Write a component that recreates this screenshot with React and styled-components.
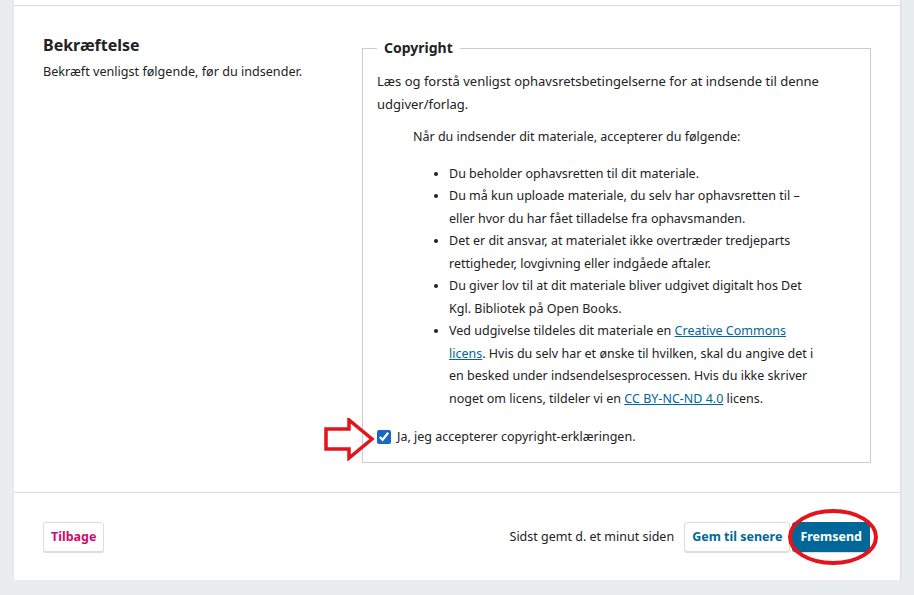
import React from 'react';
import styled, { createGlobalStyle } from 'styled-components';

const Global = createGlobalStyle`
  html, body {
    margin: 0;
    padding: 0;
    background: #eaeded;
    font-family: "Noto Sans", "DejaVu Sans", sans-serif;
    color: #222;
  }
`;

const Page = styled.div`
  width: 887px;
  margin-left: 14px;
  background: #fff;
  box-shadow: 0 1px 1px rgba(0, 0, 0, 0.12);
  border-right: 1px solid #dcdfe0;
  box-sizing: border-box;
`;

const TopStrip = styled.div`
  height: 5px;
  border-bottom: 1px solid #ddd;
`;

const Section = styled.div`
  display: flex;
  padding: 31px 29px 29px 29px;
  border-bottom: 1px solid #ddd;
`;

const Intro = styled.div`
  width: 319px;
  flex: none;
`;

const Heading = styled.h2`
  margin: 0;
  font-size: 16px;
  line-height: 16px;
  font-weight: 700;
`;

const IntroText = styled.p`
  margin: 9px 0 0;
  font-size: 12.6px;
  line-height: 20px;
`;

const Fieldset = styled.fieldset`
  position: relative;
  flex: 1;
  margin: 0;
  padding: 0 14px 13px;
  border: 1px solid #ccc;
  font-size: 12.5px;
  line-height: 22.5px;
`;

const Legend = styled.legend`
  padding: 0 7px;
  font-size: 14px;
  line-height: 22px;
  font-weight: 700;
`;

const Para = styled.p`
  margin: 11px 0 0;
  font-size: 13px;
`;

const Terms = styled.div`
  margin: 11px 34px 0 36px;
`;

const List = styled.ul`
  margin: 14px 0 0;
  padding-left: 36px;
`;

const Link = styled.a`
  color: #006798;
  text-decoration: underline;
`;

const CheckRow = styled.label`
  display: flex;
  align-items: center;
  gap: 6px;
  margin-top: 16px;
`;

const Check = styled.input`
  width: 14px;
  height: 14px;
  margin: 0;
  accent-color: #1668c4;
`;

const Arrow = styled.svg`
  position: absolute;
  left: -40px;
  bottom: 1px;
`;

const Footer = styled.div`
  display: flex;
  align-items: center;
  padding: 29px 30px 28px 29px;
`;

const Spacer = styled.div`
  flex: 1;
`;

const Status = styled.span`
  font-size: 12.5px;
  margin-right: 10px;
`;

const Button = styled.button`
  position: relative;
  height: 30px;
  padding: 0 7px;
  font-family: inherit;
  font-size: 12.5px;
  font-weight: 700;
  border-radius: 3px;
  cursor: pointer;
  color: ${p => (p.$primary ? '#fff' : p.$danger ? '#d00a6c' : '#006798')};
  background: ${p => (p.$primary ? '#006798' : '#fff')};
  border: 1px solid ${p => (p.$primary ? '#006798' : '#ddd')};
  box-shadow: 0 1px 0 #ddd;
  margin-left: ${p => (p.$primary ? '2px' : '0')};
`;

const Ring = styled.svg`
  position: absolute;
  left: -7px;
  top: -16px;
  pointer-events: none;
`;

export default function App() {
  return (
    <>
      <Global />
      <Page>
        <TopStrip />
        <Section>
          <Intro>
            <Heading>Bekræftelse</Heading>
            <IntroText>Bekræft venligst følgende, før du indsender.</IntroText>
          </Intro>
          <Fieldset>
            <Legend>Copyright</Legend>
            <Para>
              Læs og forstå venligst ophavsretsbetingelserne for at indsende til denne udgiver/forlag.
            </Para>
            <Terms>
              <div>Når du indsender dit materiale, accepterer du følgende:</div>
              <List>
                <li>Du beholder ophavsretten til dit materiale.</li>
                <li>
                  Du må kun uploade materiale, du selv har ophavsretten til – eller hvor du har fået
                  tilladelse fra ophavsmanden.
                </li>
                <li>
                  Det er dit ansvar, at materialet ikke overtræder tredjeparts rettigheder, lovgivning
                  eller indgåede aftaler.
                </li>
                <li>
                  Du giver lov til at dit materiale bliver udgivet digitalt hos Det Kgl. Bibliotek på
                  Open Books.
                </li>
                <li>
                  Ved udgivelse tildeles dit materiale en <Link href="#">Creative Commons licens</Link>.
                  Hvis du selv har et ønske til hvilken, skal du angive det i en besked under
                  indsendelsesprocessen. Hvis du ikke skriver noget om licens, tildeler vi en{' '}
                  <Link href="#">CC BY-NC-ND 4.0</Link> licens.
                </li>
              </List>
            </Terms>
            <CheckRow>
              <Check type="checkbox" defaultChecked />
              Ja, jeg accepterer copyright-erklæringen.
            </CheckRow>
            <Arrow width="52" height="43" viewBox="0 0 52 43">
              <path
                d="M3 11 H26 V2 L49 21 L26 40 V31 H3 Z"
                fill="none"
                stroke="#e3141c"
                strokeWidth="3.5"
                strokeLinejoin="miter"
              />
            </Arrow>
          </Fieldset>
        </Section>
        <Footer>
          <Button $danger>Tilbage</Button>
          <Spacer />
          <Status>Sidst gemt d. et minut siden</Status>
          <Button>Gem til senere</Button>
          <Button $primary>
            Fremsend
            <Ring width="94" height="60" viewBox="0 0 94 60">
              <ellipse cx="47" cy="30" rx="43" ry="26" fill="none" stroke="#e3141c" strokeWidth="4" />
            </Ring>
          </Button>
        </Footer>
      </Page>
    </>
  );
}
